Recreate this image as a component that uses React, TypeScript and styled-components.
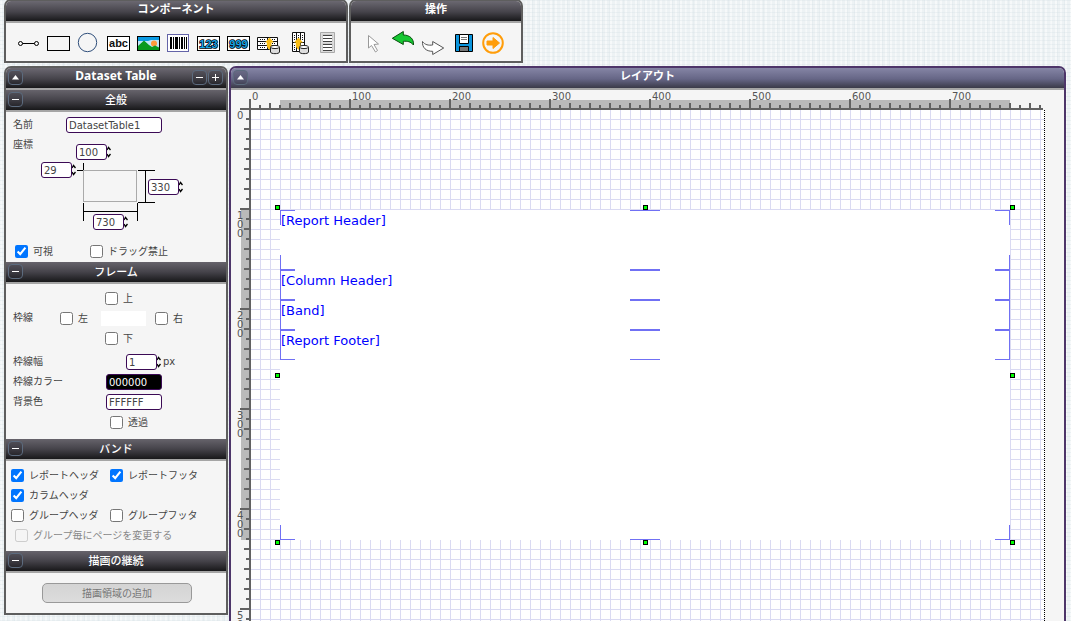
import React from "react";
import styled, { createGlobalStyle, css } from "styled-components";

const GlobalStyle = createGlobalStyle`
  * { box-sizing: border-box; }
  body {
    margin: 0;
    color: #444;
    font: 10px/20px "DejaVu Sans", "Noto Sans CJK JP", sans-serif;
    background-color: #edf2f4;
    background-image:
      repeating-linear-gradient(0deg, rgba(205, 218, 224, 0.25) 0 1px, transparent 1px 4px),
      repeating-linear-gradient(90deg, rgba(255, 255, 255, 0.5) 0 2px, transparent 2px 5px),
      repeating-linear-gradient(90deg, rgba(205, 218, 224, 0.2) 0 1px, transparent 1px 7px);
  }
`;

const Shell = styled.div`
  display: flex;
  flex-direction: column;
  gap: 3px;
  height: 100vh;
  padding: 0 5px 0 4px;
  overflow: hidden;
`;

const Toolbars = styled.header`
  display: flex;
  gap: 1px;
  margin-top: -1px;
`;

const Workspace = styled.div`
  display: flex;
  align-items: flex-start;
  gap: 1px;
`;

const Panel = styled.section<{ $tone?: "violet" }>`
  flex: none;
  border: 2px solid ${(p) => (p.$tone ? "#4d3569" : "#5e5e5e")};
  border-radius: 7px 7px 0 0;
  background: #f5f5f5;
  overflow: hidden;
`;

const SidePanel = styled(Panel)`
  width: 224px;
`;

const LayoutPanel = styled(Panel)`
  flex: 1;
  min-width: 0;
`;

const bar = css`
  display: grid;
  grid-template-columns: 32px 1fr 32px;
  height: 22px;
  margin: 0;
  padding: 0 2px;
  border-bottom: 2px solid #a5a5a5;
  color: #fff;
  font-family: "Noto Sans", "Noto Sans CJK JP", sans-serif;
  font-size: 11px;
  text-align: center;
`;

const TitleBar = styled.div<{ $tone?: "violet" }>`
  ${bar}
  background: ${(p) =>
    p.$tone
      ? "linear-gradient(#8585a5, #666686 55%, #3a3a48)"
      : "linear-gradient(#6b6871, #45434a 55%, #18181a)"};
`;

const Title = styled.h1<{ $latin?: boolean }>`
  grid-column: 2;
  margin: 0;
  font-size: ${(p) => (p.$latin ? 12 : 11)}px;
  font-weight: 700;
  line-height: 16px;
  white-space: nowrap;
`;

const SectionBar = styled.div`
  ${bar}
  background: linear-gradient(#66636b, #45434a 50%, #18181a);
`;

const SectionTitle = styled.h2`
  grid-column: 2;
  margin: 0;
  font-size: 11px;
  font-weight: 500;
  line-height: 20px;
`;

const BarButtons = styled.div`
  display: flex;
  gap: 1px;
  padding-top: 2px;
`;

const BarButton = styled.button`
  width: 15px;
  height: 15px;
  padding: 0;
  border: 1px solid #5c6b7e;
  border-radius: 4px;
  background: rgba(30, 30, 40, 0.2);
  line-height: 0;
  svg { display: block; }
`;

const ToolRow = styled.div<{ $end: number }>`
  display: flex;
  height: 38px;
  padding: 5px ${(p) => p.$end}px 3px 8px;
`;

const ToolButton = styled.button`
  width: 30px;
  height: 30px;
  padding: 0;
  border: 0;
  background: none;
  svg { display: block; }
`;

const Fields = styled.div<{ $pad: string }>`
  padding: ${(p) => p.$pad};
`;

const Row = styled.div<{ $cols: string; $indent?: number }>`
  display: grid;
  grid-template-columns: ${(p) => p.$cols};
  align-items: center;
  min-height: 20px;
  padding-left: ${(p) => p.$indent ?? 0}px;
`;

const Field = styled.input<{ $width: number; $dark?: boolean }>`
  width: ${(p) => p.$width}px;
  height: 16px;
  padding: 0 2px;
  border: 1px solid #3b0a55;
  border-radius: 3px;
  color: ${(p) => (p.$dark ? "#fff" : "#444")};
  background: ${(p) => (p.$dark ? "#000" : "#fff")};
  font: 10px/14px "DejaVu Sans", sans-serif;
`;

const Stepper = styled.span`
  display: flex;
  align-items: center;
  height: 16px;
`;

const StepButtons = styled.span`
  display: flex;
  flex-direction: column;
  gap: 2px;
`;

const StepButton = styled.button`
  width: 4px;
  height: 5px;
  padding: 0;
  border: 0;
  background: none;
  line-height: 0;
  svg { display: block; }
`;

const Unit = styled.span`
  padding-left: 2px;
`;

const PositionRow = styled.div`
  display: grid;
  grid-template-columns: 28px 1fr;
  margin-bottom: 11px;
`;

const PositionGrid = styled.div`
  display: grid;
  grid-template: 18px 17px 35px 16px / 35px 17px 55px 35px;
  margin-top: 9px;
  & > svg { grid-area: 1 / 1 / -1 / -1; }
`;

const Cell = styled.div<{ $area: string }>`
  grid-area: ${(p) => p.$area};
  z-index: 1;
`;

const CheckLabel = styled.label<{ $off?: boolean }>`
  display: flex;
  align-items: center;
  gap: 5px;
  height: 20px;
  white-space: nowrap;
  color: ${(p) => (p.$off ? "#888" : "#444")};
`;

const CheckBox = styled.input`
  width: 13px;
  height: 13px;
  margin: 0;
`;

const Caption = styled.span`
  padding-top: 2px;
`;

const BorderGrid = styled.div`
  display: grid;
  grid-template: repeat(3, 20px) / 47px 41px 45px 1fr;
  align-items: center;
  margin-bottom: 4px;
`;

const BorderCell = styled.div<{ $area: string; $indent?: number }>`
  grid-area: ${(p) => p.$area};
  padding-left: ${(p) => p.$indent ?? 0}px;
`;

const BorderPreview = styled.div`
  grid-area: 2 / 3;
  height: 15px;
  background: #fff;
`;

const AddButton = styled.button`
  display: block;
  width: 150px;
  height: 20px;
  margin: 10px 34px 10px 36px;
  padding: 0;
  border: 1px solid #999;
  border-radius: 5px;
  color: #777;
  background: linear-gradient(#d4d4d4, #dcdcdc);
  font: 10px/18px "Noto Sans CJK JP", sans-serif;
`;

const Designer = styled.div`
  display: grid;
  grid-template: 18px auto / 18px 1fr;
`;

const TopRuler = styled.div`
  grid-area: 1 / 2;
  display: flex;
  width: 794px;
  height: 20px;
  overflow: hidden;
  border-bottom: 2px solid #626262;
  background:
    repeating-linear-gradient(90deg, #626262 0 2px, transparent 2px 100px) 0 100% / 100% 9px no-repeat,
    repeating-linear-gradient(90deg, #626262 0 2px, transparent 2px 20px) 0 100% / 100% 5px no-repeat,
    repeating-linear-gradient(90deg, #626262 0 2px, transparent 2px 10px) 0 100% / 100% 3px no-repeat,
    linear-gradient(#bababa, #bababa) 31px 100% / 730px 8px no-repeat;
`;

const TopMark = styled.span`
  flex: none;
  width: 100px;
  padding-left: 3px;
  color: #555;
  line-height: 14px;
`;

const SideRuler = styled.div`
  grid-area: 1 / 1 / 3;
  margin-top: 18px;
  width: 20px;
  height: 1124px;
  border-right: 2px solid #626262;
  background:
    repeating-linear-gradient(#626262 0 2px, transparent 2px 100px) 100% 0 / 9px 100% no-repeat,
    repeating-linear-gradient(#626262 0 2px, transparent 2px 20px) 100% 0 / 5px 100% no-repeat,
    repeating-linear-gradient(#626262 0 2px, transparent 2px 10px) 100% 0 / 3px 100% no-repeat,
    linear-gradient(#bababa, #bababa) 100% 101px / 8px 331px no-repeat;
`;

const SideMark = styled.span`
  display: block;
  width: 12px;
  height: 100px;
  padding: 3px 0 0 6px;
  color: #555;
  line-height: 9px;
  word-break: break-all;
`;

const Paper = styled.div`
  grid-area: 2 / 2;
  position: relative;
  width: 794px;
  height: 1123px;
  margin: 2px 0 0 2px;
  border-right: 1px dotted #000;
  background:
    repeating-linear-gradient(90deg, transparent 0 9px, #dadaf2 9px 10px),
    repeating-linear-gradient(transparent 0 9px, #dadaf2 9px 10px),
    #fff;
`;

/* Report item placed on the page at its own coordinates. */
const DatasetTable = styled.div`
  position: absolute;
  left: 29px;
  top: 100px;
  width: 730px;
  height: 330px;
  background: #fff;
`;

const h = "linear-gradient(#7070f4, #7070f4)";
const Marked = styled.div`
  background:
    ${h} 0 0 / 15px 1px, ${h} 50% 0 / 30px 1px, ${h} 100% 0 / 15px 1px,
    ${h} 0 100% / 15px 1px, ${h} 50% 100% / 30px 1px, ${h} 100% 100% / 15px 1px,
    ${h} 0 0 / 1px 15px, ${h} 100% 0 / 1px 15px,
    ${h} 0 100% / 1px 15px, ${h} 100% 100% / 1px 15px;
  background-repeat: no-repeat;
`;

const TableFrame = styled(Marked)`
  height: 100%;
`;

const Band = styled(Marked)<{ $height: number }>`
  height: ${(p) => p.$height}px;
  padding-left: 1px;
  color: #00f;
  font-size: 13px;
  line-height: 22px;
`;

const Handle = styled.span<{ $x: string; $y: string }>`
  position: absolute;
  left: ${(p) => p.$x};
  top: ${(p) => p.$y};
  width: 5px;
  height: 5px;
  border: 1px solid #000;
  background: #0f0;
`;

const Glyph = ({ d }: { d: string }) => (
  <svg width="13" height="13" viewBox="0 0 13 13" fill="none" stroke="#fff" strokeWidth="1">
    <path d={d} />
  </svg>
);
const MINUS = "M3 6.5H10";
const PLUS = "M3 6.5H10M6.5 3V10";

const Minus = () => <BarButton aria-label="折りたたむ"><Glyph d={MINUS} /></BarButton>;
const Collapse = () => (
  <BarButton aria-label="閉じる">
    <svg width="13" height="13" viewBox="0 0 13 13"><path d="M6.5 4L10 8.5H3z" fill="#fff" /></svg>
  </BarButton>
);

const Section = ({ title }: { title: string }) => (
  <SectionBar>
    <BarButtons><Minus /></BarButtons>
    <SectionTitle>{title}</SectionTitle>
  </SectionBar>
);

const Check = ({ text, on, off }: { text: string; on?: boolean; off?: boolean }) => (
  <CheckLabel $off={off}>
    <CheckBox type="checkbox" defaultChecked={on} disabled={off} />
    <Caption>{text}</Caption>
  </CheckLabel>
);

const NumberBox = ({ id, name, value }: { id: string; name: string; value: string }) => (
  <Stepper>
    <Field id={id} aria-label={name} $width={31} defaultValue={value} />
    <StepButtons>
      <StepButton aria-label={name + " +"}>
        <svg width="4" height="5" viewBox="0 0 4 5" fill="none" stroke="#000" strokeWidth="1.3"><path d="M0 4L1.500 1.500L3.500 4" /></svg>
      </StepButton>
      <StepButton aria-label={name + " -"}>
        <svg width="4" height="5" viewBox="0 0 4 5" fill="none" stroke="#000" strokeWidth="1.3"><path d="M0 1L1.500 3.500L3.500 1" /></svg>
      </StepButton>
    </StepButtons>
  </Stepper>
);

const Db = ({ x, y }: { x: number; y: number }) => (
  <g transform={`translate(${x} ${y})`}>
    <path d="M.5 2v5c0 2.2 9 2.2 9 0V2" fill="#ddd" stroke="#222" />
    <ellipse cx="5" cy="2" rx="4.5" ry="1.6" fill="#fff" stroke="#222" />
  </g>
);

const digits = (t: string) => (
  <>
    <rect x="3.5" y="8.5" width="22" height="14" fill="#fff" stroke="#000" />
    <text x="14.5" y="20" textAnchor="middle" fontFamily="Liberation Sans" fontWeight="700" fontSize="11"
      fill="#19a5e6" stroke="#000" strokeWidth="1.5" paintOrder="stroke">{t}</text>
  </>
);

const components: [string, React.ReactNode][] = [
  ["線", <g fill="none" stroke="#000"><path d="M8.5 15.5H20.5" /><circle cx="6.5" cy="15.5" r="2" /><circle cx="22.5" cy="15.5" r="2" /></g>],
  ["矩形", <rect x="3.5" y="8.5" width="22" height="14" fill="none" stroke="#000" />],
  ["楕円", <circle cx="13.5" cy="14.5" r="9.2" fill="none" stroke="#31507c" />],
  ["テキスト", <>
    <rect x="3.5" y="8.5" width="22" height="14" fill="#fff" stroke="#000" />
    <text x="14.5" y="19" textAnchor="middle" fontFamily="Liberation Sans" fontWeight="700" fontSize="11" fill="#111">abc</text>
  </>],
  ["画像", <>
    <rect x="3.5" y="8.5" width="22" height="14" fill="#0b9be3" stroke="#000" />
    <path d="M4 13h10l3-1 8 0v8H4z" fill="#fff" opacity=".75" />
    <circle cx="20" cy="15.5" r="3" fill="#ff9a3c" />
    <path d="M4 22V18L10 12.5L15 17L18 19L21 17.5L25 19.5V22z" fill="#0a9a1e" />
  </>],
  ["バーコード", <>
    <rect x="3.5" y="6.5" width="21" height="17" fill="#fff" stroke="#6464a8" />
    <path d="M6 9h2v12H6zM9 9h1v12H9zM11 9h3v12h-3zM15 9h1v12h-1zM17 9h2v12h-2zM20 9h1v12h-1zM22 9h1v12h-1z" fill="#000" />
  </>],
  ["番号", digits("123")],
  ["ページ", digits("999")],
  ["データ表", <>
    <path d="M3.5 9.5h20v12h-20zM3.5 13.5h20M3.5 17.5h20M13.5 9.5v12" fill="#fff" stroke="#111" />
    <path d="M6 11.5h6M16 11.5h6M6 15.5h6M16 15.5h6M6 19.5h6" stroke="#111" strokeDasharray="1 1" />
    <path d="M15.5 9.5L20 14.5H17.5C17 17 18 19 20 20.5L18 22.5C14 21.5 12 19 13 14.5H11z" fill="#f9bd14" />
    <Db x={16} y={17} />
  </>],
  ["クロス表", <>
    <path d="M8.5 4.5h12v19h-12zM12.5 4.5v19M16.5 4.5v19M8.5 14.5h12" fill="#fff" stroke="#111" />
    <path d="M10.5 7v6M14.5 7v6M18.5 7v6M10.5 17v6" stroke="#111" strokeDasharray="1 1" />
    <path d="M14.5 9.500L19 14.5H16.5C16 17 17 19 19 20.5L17 22.5C13 21.5 11 19 12 14.5H10z" fill="#f9bd14" />
    <Db x={15} y={17} />
  </>],
  ["リスト", <>
    <path d="M6.5 4.5h14v20h-14z" fill="#ddd" stroke="#aaa" />
    <path d="M8.5 6.5h10v7h-10zM8.5 15.5h10v7h-10z" fill="#fff" stroke="#ccc" />
    <path d="M9 7.5h9M9 10.5h9M9 13.5h9M9 16.5h9M9 19.5h9M9 22.5h9" stroke="#444" />
  </>],
];

const operations: [string, React.ReactNode][] = [
  ["選択", <path d="M10.5 7.5V20L13.5 17.5L17.5 24L19.5 22.5L16 16.5L20.5 16z" fill="#fff" stroke="#999" />],
  ["元に戻す", <path d="M4.3 10.3L15.3 3.5V7C22 7 26 11 25.5 17C22.5 13.5 19.5 13 15.3 13.3V16.5z" fill="#16c832" stroke="#064d0c" />],
  ["やり直し", <path d="M25.7 20L14.7 13.5V17C10.5 17.5 7 17 4.5 13.5C4 19.5 8 23.5 14.7 23.3V26.5z" fill="#fff" stroke="#555" />],
  ["保存", <>
    <path d="M7.5 6.5h17v17h-17z" fill="#0b94dc" stroke="#000" />
    <path d="M11.5 6.5h9v9h-9z" fill="#fff" stroke="#000" />
    <path d="M13 9.5h6M13 11.5h6" stroke="#777" />
    <path d="M11.5 18.5h9v5h-9z" fill="#777" stroke="#000" />
  </>],
  ["次へ", <>
    <circle cx="15" cy="15" r="9.8" fill="none" stroke="#ff9d0a" strokeWidth="2" />
    <path d="M9 13h6V9.5l6.5 5.500-6.500 5.500V17H9z" fill="#ff9d0a" stroke="#ff9d0a" strokeLinejoin="round" />
  </>],
];

type ToolsProps = { title: string; items: [string, React.ReactNode][]; end: number; shift?: number };

const Tools = ({ title, items, end, shift = 0 }: ToolsProps) => (
  <Panel>
    <TitleBar><Title>{title}</Title></TitleBar>
    <ToolRow $end={end}>
      {items.map(([name, art]) => (
        <ToolButton key={name} aria-label={name}>
          <svg width="30" height="30" viewBox={`${shift} 0 30 30`}>{art}</svg>
        </ToolButton>
      ))}
    </ToolRow>
  </Panel>
);

export default function App() {
  return (
    <>
      <GlobalStyle />
      <Shell>
        <Toolbars>
          <Tools title="コンポーネント" items={components} end={2} />
          <Tools title="操作" items={operations} end={12} shift={1} />
        </Toolbars>
        <Workspace>
          <SidePanel as="aside">
            <TitleBar>
              <BarButtons><Collapse /></BarButtons>
              <Title $latin>Dataset Table</Title>
              <BarButtons>
                <Minus />
                <BarButton aria-label="すべて展開"><Glyph d={PLUS} /></BarButton>
              </BarButtons>
            </TitleBar>

            <Section title="全般" />
            <Fields $pad="3px 7px 1px">
              <Row $cols="53px 1fr">
                <label htmlFor="name">名前</label>
                <Field id="name" $width={96} defaultValue="DatasetTable1" />
              </Row>
              <PositionRow>
                <span>座標</span>
                <PositionGrid>
                  <svg width="142" height="86" viewBox="0 0 142 86" fill="none" stroke="#000">
                    <rect x="42.5" y="26.5" width="53" height="31" stroke="#aaa" />
                    <path d="M36 26.5H42M42.5 19V26M97 26.5H114M97 58.5H114M104.5 26V58M42.5 59V77M96.5 59V77M42 67.5H97" />
                  </svg>
                  <Cell $area="1 / 2 / 2 / 4"><NumberBox id="y" name="Y" value="100" /></Cell>
                  <Cell $area="2 / 1"><NumberBox id="x" name="X" value="29" /></Cell>
                  <Cell $area="3 / 4"><NumberBox id="h" name="高さ" value="330" /></Cell>
                  <Cell $area="4 / 3"><NumberBox id="w" name="幅" value="730" /></Cell>
                </PositionGrid>
              </PositionRow>
              <Row $cols="75px 1fr" $indent={2}>
                <Check text="可視" on />
                <Check text="ドラッグ禁止" />
              </Row>
            </Fields>

            <Section title="フレーム" />
            <Fields $pad="4px 7px 7px">
              <BorderGrid>
                <BorderCell $area="2 / 1">枠線</BorderCell>
                <BorderCell $area="1 / 3" $indent={4}><Check text="上" /></BorderCell>
                <BorderCell $area="2 / 2"><Check text="左" /></BorderCell>
                <BorderPreview />
                <BorderCell $area="2 / 4" $indent={9}><Check text="右" /></BorderCell>
                <BorderCell $area="3 / 3" $indent={4}><Check text="下" /></BorderCell>
              </BorderGrid>
              <Row $cols="113px auto 1fr">
                <label htmlFor="bw">枠線幅</label>
                <NumberBox id="bw" name="枠線幅" value="1" />
                <Unit>px</Unit>
              </Row>
              <Row $cols="93px 1fr">
                <label htmlFor="bc">枠線カラー</label>
                <Field id="bc" $width={56} $dark defaultValue="000000" />
              </Row>
              <Row $cols="93px 1fr">
                <label htmlFor="bg">背景色</label>
                <Field id="bg" $width={56} defaultValue="FFFFFF" />
              </Row>
              <Row $cols="1fr" $indent={97}><Check text="透過" /></Row>
            </Fields>

            <Section title="バンド" />
            <Fields $pad="4px 5px 6px">
              <Row $cols="99px 1fr">
                <Check text="レポートヘッダ" on />
                <Check text="レポートフッタ" on />
              </Row>
              <Row $cols="1fr"><Check text="カラムヘッダ" on /></Row>
              <Row $cols="99px 1fr">
                <Check text="グループヘッダ" />
                <Check text="グループフッタ" />
              </Row>
              <Row $cols="1fr" $indent={4}><Check text="グループ毎にページを変更する" off /></Row>
            </Fields>

            <Section title="描画の継続" />
            <AddButton>描画領域の追加</AddButton>
          </SidePanel>

          <LayoutPanel as="main" $tone="violet">
            <TitleBar $tone="violet">
              <BarButtons><Collapse /></BarButtons>
              <Title>レイアウト</Title>
            </TitleBar>
            <Designer>
              <TopRuler>
                {[0, 100, 200, 300, 400, 500, 600, 700].map((n) => <TopMark key={n}>{n}</TopMark>)}
              </TopRuler>
              <SideRuler>
                {[0, 100, 200, 300, 400, 500].map((n) => <SideMark key={n}>{n}</SideMark>)}
              </SideRuler>
              <Paper>
                <DatasetTable>
                  <TableFrame>
                    <Band $height={60}>[Report Header]</Band>
                    <Band $height={30}>[Column Header]</Band>
                    <Band $height={30}>[Band]</Band>
                    <Band $height={30}>[Report Footer]</Band>
                  </TableFrame>
                  <Handle $x="-5px" $y="-5px" />
                  <Handle $x="calc(50% - 2px)" $y="-5px" />
                  <Handle $x="100%" $y="-5px" />
                  <Handle $x="-5px" $y="calc(50% - 2px)" />
                  <Handle $x="100%" $y="calc(50% - 2px)" />
                  <Handle $x="-5px" $y="100%" />
                  <Handle $x="calc(50% - 2px)" $y="100%" />
                  <Handle $x="100%" $y="100%" />
                </DatasetTable>
              </Paper>
            </Designer>
          </LayoutPanel>
        </Workspace>
      </Shell>
    </>
  );
}
